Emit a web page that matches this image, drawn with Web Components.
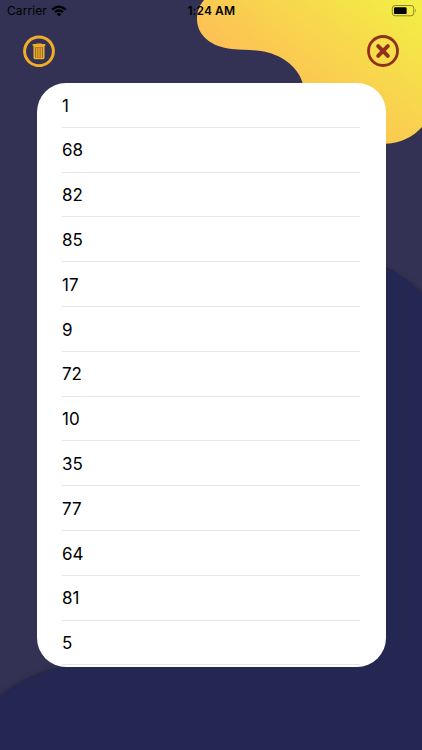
<!DOCTYPE html>
<html lang="en">
<head>
    <meta charset="UTF-8">
    <meta name="viewport" content="width=device-width, initial-scale=1.0">
    <title>Numbers</title>
    <style>
        body {
            margin: 0;
            font-family: Inter, "Liberation Sans", sans-serif;
        }
    </style>
</head>
<body>
    <history-screen>
        <status-bar slot="status" carrier="Carrier" time="1:24 AM"></status-bar>
        <round-button slot="actions" icon="trash"></round-button>
        <round-button slot="actions" icon="close"></round-button>
        <number-list numbers="1,68,82,85,17,9,72,10,35,77,64,81,5"></number-list>
    </history-screen>

    <script>
        class StatusBar extends HTMLElement {
            constructor() {
                super();
                this.attachShadow({mode: "open"});
            }
            getTemplate() {
                const template = document.createElement("template");
                template.innerHTML = `
                    <div class="left">
                        <span>${this.getAttribute("carrier")}</span>
                        <svg class="wifi" width="16" height="12" viewBox="0 0 16 12">
                            <path d="M0.5 3.8 Q8 -2.8 15.5 3.8 L14 5.4 Q8 0.3 2 5.4Z"/>
                            <path d="M3 6.4 Q8 2.2 13 6.4 L11.4 8 Q8 5.3 4.6 8Z"/>
                            <path d="M5.6 9 Q8 7.1 10.4 9 L8 11.4Z"/>
                        </svg>
                    </div>
                    <span class="time">${this.getAttribute("time")}</span>
                    <div class="right">
                        <svg width="26" height="12" viewBox="0 0 26 12">
                            <rect x="1.3" y="0.5" width="21.5" height="10.3" rx="2.8" fill="none" stroke="#000" stroke-opacity="0.42"/>
                            <rect x="3" y="2.2" width="12.6" height="6.9" rx="1.2"/>
                            <path d="M24.1 3.8 Q25.6 5.6 24.1 7.4Z" fill-opacity="0.5"/>
                        </svg>
                    </div>
                    ${this.getStyles()}
                `;
                return template;
            }
            getStyles() {
                return `
                    <style>
                        :host {
                            display: grid;
                            grid-template-columns: 1fr auto 1fr;
                            align-items: center;
                            height: 22px;
                            padding: 0 5px 0 7px;
                            box-sizing: border-box;
                            font-size: 12px;
                            color: #000;
                        }
                        .left {
                            display: flex;
                            align-items: center;
                            gap: 4px;
                            letter-spacing: 0.08px;
                        }
                        .left span, .time {
                            padding-bottom: 1px;
                        }
                        .wifi {
                            margin-top: -1px;
                        }
                        .time {
                            font-weight: 600;
                            letter-spacing: 0.1px;
                            margin-right: 1.5px;
                        }
                        .right {
                            display: flex;
                            justify-content: flex-end;
                        }
                    </style>
                `;
            }
            connectedCallback() {
                this.shadowRoot.appendChild(this.getTemplate().content.cloneNode(true));
            }
        }
        customElements.define("status-bar", StatusBar);

        const icons = {
            trash: `
                <g fill="none" stroke="#f0ad27">
                    <circle cx="16" cy="16.3" r="14.4" stroke-width="3"/>
                    <path d="M10.4 10H21.6" stroke-width="1.8" stroke-linecap="round"/>
                    <path d="M13.8 9H18.2" stroke-width="1.2" stroke-linecap="round"/>
                    <path d="M11.2 11.6H20.8V22.4Q20.8 23.6 19.6 23.6H12.4Q11.2 23.6 11.2 22.4Z" stroke-width="1.5" fill="#97702f"/>
                    <path d="M13.7 13V22.6M16 13V22.6M18.3 13V22.6" stroke-width="1.2"/>
                </g>`,
            close: `
                <g fill="none" stroke="#92301f">
                    <circle cx="16" cy="16" r="14.5" stroke-width="2.8"/>
                    <path d="M11.2 11.2L20.8 20.8M20.8 11.2L11.2 20.8" stroke-width="4" stroke-linecap="round"/>
                </g>`
        };

        class RoundButton extends HTMLElement {
            constructor() {
                super();
                this.attachShadow({mode: "open"});
            }
            connectedCallback() {
                this.shadowRoot.innerHTML = `
                    <style>
                        :host {
                            display: block;
                            width: 32px;
                            height: 32px;
                        }
                        button {
                            display: block;
                            padding: 0;
                            border: 0;
                            background: none;
                            cursor: pointer;
                        }
                        svg {
                            display: block;
                        }
                    </style>
                    <button><svg width="32" height="32" viewBox="0 0 32 32">${icons[this.getAttribute("icon")]}</svg></button>
                `;
            }
        }
        customElements.define("round-button", RoundButton);

        class NumberList extends HTMLElement {
            constructor() {
                super();
                this.attachShadow({mode: "open"});
            }
            connectedCallback() {
                const rows = this.getAttribute("numbers").split(",").map(n => `<li>${n}</li>`).join("");
                this.shadowRoot.innerHTML = `
                    <style>
                        :host {
                            display: block;
                            height: 584.5px;
                            border-radius: 29px;
                            background-color: #fff;
                            overflow: hidden;
                        }
                        ul {
                            list-style: none;
                            margin: 0;
                            padding: 0.6px 25.5px 0;
                        }
                        li {
                            display: flex;
                            align-items: center;
                            height: 44.8px;
                            padding-top: 1.4px;
                            box-sizing: border-box;
                            border-bottom: 1px solid #e6e6e6;
                            font-size: 17px;
                            letter-spacing: 0;
                            color: #000;
                        }
                    </style>
                    <ul>${rows}</ul>
                `;
            }
        }
        customElements.define("number-list", NumberList);

        class HistoryScreen extends HTMLElement {
            constructor() {
                super();
                this.attachShadow({mode: "open"});
            }
            getTemplate() {
                const template = document.createElement("template");
                template.innerHTML = `
                    <svg class="backdrop" width="422" height="750" viewBox="0 0 422 750">
                        <defs>
                            <linearGradient id="sun" gradientUnits="userSpaceOnUse" x1="290" y1="110" x2="385" y2="-15">
                                <stop offset="0" stop-color="#fdbf55"/>
                                <stop offset="1" stop-color="#f3ed45"/>
                            </linearGradient>
                            <filter id="soft" x="-10%" y="-10%" width="120%" height="120%">
                                <feGaussianBlur stdDeviation="1.6"/>
                            </filter>
                        </defs>
                        <path d="M-10 702C12 682 32 672 58 666L200 500L386 266C401 273 412 282 432 300V780H-10Z" fill="#2a2b47" filter="url(#soft)"/>
                        <path d="M-10 706C12 685 32 674 58 668L200 500L386 267C401 274 412 284 432 302V780H-10Z" fill="#232751"/>
                        <path d="M204 0C199 6 197 12 197 19C197 35 211 47 232 49C243 50.3 253 49.4 264 51.5C285 56 299 69 303 84L330 130C350 140 368 144 386 143.7C401 143 413 137 422 127V0Z" fill="url(#sun)"/>
                    </svg>
                    <slot name="status"></slot>
                    <nav><slot name="actions"></slot></nav>
                    <main><slot></slot></main>
                    ${this.getStyles()}
                `;
                return template;
            }
            getStyles() {
                return `
                    <style>
                        :host {
                            display: flex;
                            flex-direction: column;
                            position: relative;
                            z-index: 0;
                            width: 422px;
                            height: 750px;
                            overflow: hidden;
                            background-color: #333254;
                        }
                        .backdrop {
                            position: absolute;
                            inset: 0;
                            z-index: -1;
                        }
                        nav {
                            display: flex;
                            justify-content: space-between;
                            padding: 13px 23.5px 15.5px 23px;
                        }
                        main {
                            padding: 0 36.5px;
                        }
                    </style>
                `;
            }
            connectedCallback() {
                this.shadowRoot.appendChild(this.getTemplate().content.cloneNode(true));
            }
        }
        customElements.define("history-screen", HistoryScreen);
    </script>
</body>
</html>
